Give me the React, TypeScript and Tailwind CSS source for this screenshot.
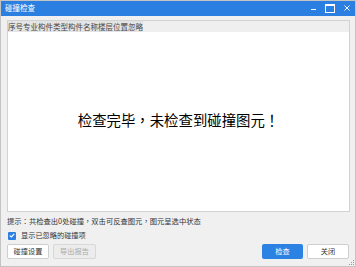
import React from "react";

const font = { fontFamily: '"Microsoft YaHei","Noto Sans CJK SC",sans-serif' };

function P({ c }: { c: string }) {
  return <span className="[font-family:'Noto_Sans_CJK_TC',sans-serif]">{c}</span>;
}

export default function App() {
  return (
    <div
      className="w-[356px] h-[267px] bg-[#f0f0f0] border border-[#c4c4c4] flex flex-col overflow-hidden text-[#333] [text-spacing-trim:space-all]"
      style={font}
    >
      {/* title bar */}
      <div className="h-[16px] -mx-px -mt-px bg-[#2b7fe0] flex items-center pl-[5px] pr-[6px] text-white">
        <span className="text-[7.5px] leading-none">碰撞检查</span>
        <div className="ml-auto flex items-center gap-[9px]">
          <div className="w-[5px] h-[1px] bg-white mt-[2px]" />
          <div className="w-[10px] h-[9px] border border-white border-t-2" />
          <svg width="6" height="6" viewBox="0 0 6 6">
            <path d="M0.5 0.5L5.5 5.5M5.5 0.5L0.5 5.5" stroke="white" strokeWidth="1" />
          </svg>
        </div>
      </div>

      {/* list panel */}
      <div className="mt-[4px] ml-[6px] w-[343px] h-[192px] border border-[#d2d2d2] bg-white flex flex-col">
        <div className="h-[11px] bg-[#efefef] flex items-center">
          <span className="text-[7.5px] leading-[11px] bg-[#e4e4e4] text-[#444]">
            序号专业构件类型构件名称楼层位置忽略
          </span>
        </div>
        <div className="flex-1 flex items-center justify-center pb-[2px]">
          <span className="text-[14.4px] text-black leading-none">
            检查完毕<P c="，" />未检查到碰撞图元<P c="！" />
          </span>
        </div>
      </div>

      {/* hint */}
      <div className="mt-[5px] ml-[6px] h-[10px] flex items-center text-[7.3px] leading-none text-[#333]">
        <span>
          提示<P c="：" />共检查出0处碰撞<P c="，" />双击可反查图元<P c="，" />图元呈选中状态
        </span>
      </div>

      {/* checkbox */}
      <div className="mt-[4px] ml-[7px] h-[9px] flex items-center gap-[5px]">
        <div className="w-[8px] h-[8px] rounded-[1px] bg-[#2b80e2] flex items-center justify-center">
          <svg width="6" height="5" viewBox="0 0 6 5">
            <path d="M0.7 2.6L2.3 4L5.3 0.9" stroke="white" strokeWidth="1.1" fill="none" />
          </svg>
        </div>
        <span className="text-[7.2px] leading-none">显示已忽略的碰撞项</span>
      </div>

      {/* buttons */}
      <div className="mt-[4px] ml-[6px] mr-[6px] flex items-center">
        <button className="w-[42px] h-[15px] bg-white border border-[#cfcfcf] rounded-[2px] text-[7.2px] leading-none text-[#333]">
          碰撞设置
        </button>
        <button className="ml-[4px] w-[43px] h-[15px] bg-[#ececec] border border-[#d8d8d8] rounded-[2px] text-[7.2px] leading-none text-[#aaa]">
          导出报告
        </button>
        <button className="ml-auto w-[41px] h-[15px] bg-[#2b82e3] rounded-[2px] text-[7.2px] leading-none text-white">
          检查
        </button>
        <button className="ml-[4px] w-[42px] h-[15px] bg-white border border-[#cfcfcf] rounded-[2px] text-[7.2px] leading-none text-[#333]">
          关闭
        </button>
      </div>

      {/* resize grip */}
      <div className="mt-auto flex justify-end pr-[1px] pb-[1px]">
        <svg width="5" height="5" viewBox="0 0 5 5">
          <rect x="4" y="0" width="1" height="1" fill="#999" />
          <rect x="2" y="2" width="1" height="1" fill="#999" />
          <rect x="4" y="2" width="1" height="1" fill="#999" />
          <rect x="0" y="4" width="1" height="1" fill="#999" />
          <rect x="2" y="4" width="1" height="1" fill="#999" />
          <rect x="4" y="4" width="1" height="1" fill="#999" />
        </svg>
      </div>
    </div>
  );
}
